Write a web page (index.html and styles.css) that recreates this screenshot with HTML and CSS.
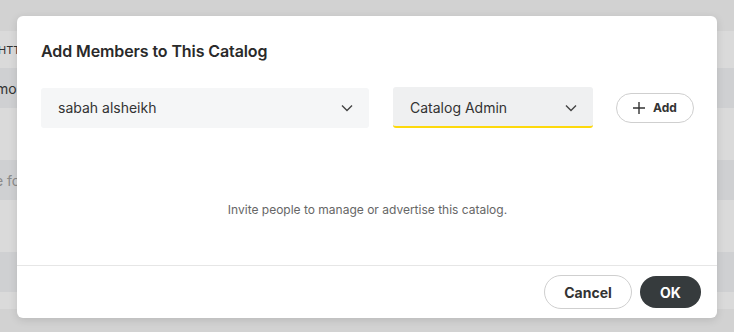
FILE: index.html
```html
<!DOCTYPE html>
<html>
<head lang="en">
    <meta charset="UTF-8">
    <title>Add Members to This Catalog</title>
    <link rel="stylesheet" href="styles.css">
</head>
<body>
    <div class="page">
        <div class="page-top"></div>
        <div class="page-row light"><span class="cell">HTTPS</span></div>
        <div class="page-row dark"><span class="cell big">more</span></div>
        <div class="page-row light tall"></div>
        <div class="page-row dark"><span class="cell faded">e for</span></div>
        <div class="page-row light tall"></div>
        <div class="page-row dark"></div>
        <div class="page-row light short"></div>
    </div>

    <div class="modal">
        <div class="modal-body">
            <h2 class="modal-title">Add Members to This Catalog</h2>
            <div class="member-row">
                <div class="select select-user">
                    <span>sabah alsheikh</span>
                    <svg class="chevron" width="12" height="8" viewBox="0 0 12 8"><path d="M1 1.5 6 6.5 11 1.5" fill="none" stroke="#444" stroke-width="1.4"/></svg>
                </div>
                <div class="select select-role">
                    <span>Catalog Admin</span>
                    <svg class="chevron" width="12" height="8" viewBox="0 0 12 8"><path d="M1 1.5 6 6.5 11 1.5" fill="none" stroke="#444" stroke-width="1.4"/></svg>
                </div>
                <button class="btn btn-add">
                    <svg width="12" height="12" viewBox="0 0 12 12"><path d="M6 0v12M0 6h12" stroke="#333" stroke-width="1.4"/></svg>
                    Add
                </button>
            </div>
            <p class="hint">Invite people to manage or advertise this catalog.</p>
        </div>
        <div class="modal-footer">
            <button class="btn btn-cancel">Cancel</button>
            <button class="btn btn-ok">OK</button>
        </div>
    </div>
</body>
</html>
```

FILE: styles.css
```css
html, body {
    margin: 0;
    padding: 0;
}

body {
    width: 734px;
    height: 332px;
    overflow: hidden;
    background-color: #d2d2d2;
    font-family: Inter, "Noto Sans", sans-serif;
}

.page-top {
    height: 31px;
    background-color: #d2d2d2;
}

.page-row {
    height: 37px;
    display: flex;
    align-items: center;
}

.page-row.light {
    background-color: #dadada;
}

.page-row.dark {
    height: 40px;
    background-color: #cfd0d2;
}

.page-row.tall {
    height: 52px;
}

.page-row.short {
    height: 17px;
}

.page-row .cell {
    font-size: 11px;
    color: #333;
    margin-left: -2px;
}

.page-row .cell.big {
    font-size: 14px;
    margin-left: -4px;
}

.page-row .cell.faded {
    font-size: 14px;
    color: #8a8a8a;
    margin-left: -5px;
}

.modal {
    position: absolute;
    left: 17px;
    top: 16px;
    width: 700px;
    height: 302px;
    background-color: #fff;
    border-radius: 6px;
    box-shadow: 0 2px 8px rgba(0, 0, 0, .12);
    display: flex;
    flex-direction: column;
}

.modal-body {
    flex: 1;
    padding: 24px 23px 0 24px;
    border-bottom: 1px solid #e6e6e6;
}

.modal-title {
    margin: 0;
    font-size: 16px;
    line-height: 22px;
    font-weight: 600;
    letter-spacing: -0.1px;
    color: #2a2a2a;
}

.member-row {
    display: flex;
    align-items: center;
    margin-top: 25px;
}

.select {
    height: 40px;
    box-sizing: border-box;
    border-radius: 3px;
    display: flex;
    align-items: center;
    justify-content: space-between;
    padding: 0 16px 0 17px;
    font-size: 14px;
    color: #333;
}

.select-user {
    width: 328px;
    background-color: #f5f6f7;
}

.select-role {
    width: 200px;
    margin-left: 24px;
    background-color: #eff0f1;
    border-bottom: 2px solid #fdd90c;
    height: 41px;
    padding-top: 2px;
}

.btn {
    font-family: inherit;
    border-radius: 20px;
    font-weight: 700;
    cursor: pointer;
}

.btn-add {
    margin-left: auto;
    width: 78px;
    height: 30px;
    border: 1px solid #cfcfcf;
    background-color: #fff;
    color: #333;
    font-size: 12px;
    display: flex;
    align-items: center;
    justify-content: center;
    gap: 8px;
    padding: 0;
}

.hint {
    margin: 74px 0 0;
    text-align: center;
    font-size: 12px;
    color: #666;
}

.modal-footer {
    height: 52px;
    display: flex;
    align-items: center;
    justify-content: flex-end;
    gap: 8px;
    padding: 0 16px;
}

.btn-cancel {
    width: 88px;
    height: 34px;
    border: 1px solid #cfcfcf;
    background-color: #fff;
    color: #333;
    font-size: 14px;
}

.btn-ok {
    width: 61px;
    height: 32px;
    border: none;
    background-color: #363b3d;
    color: #fff;
    font-size: 14px;
}
```
